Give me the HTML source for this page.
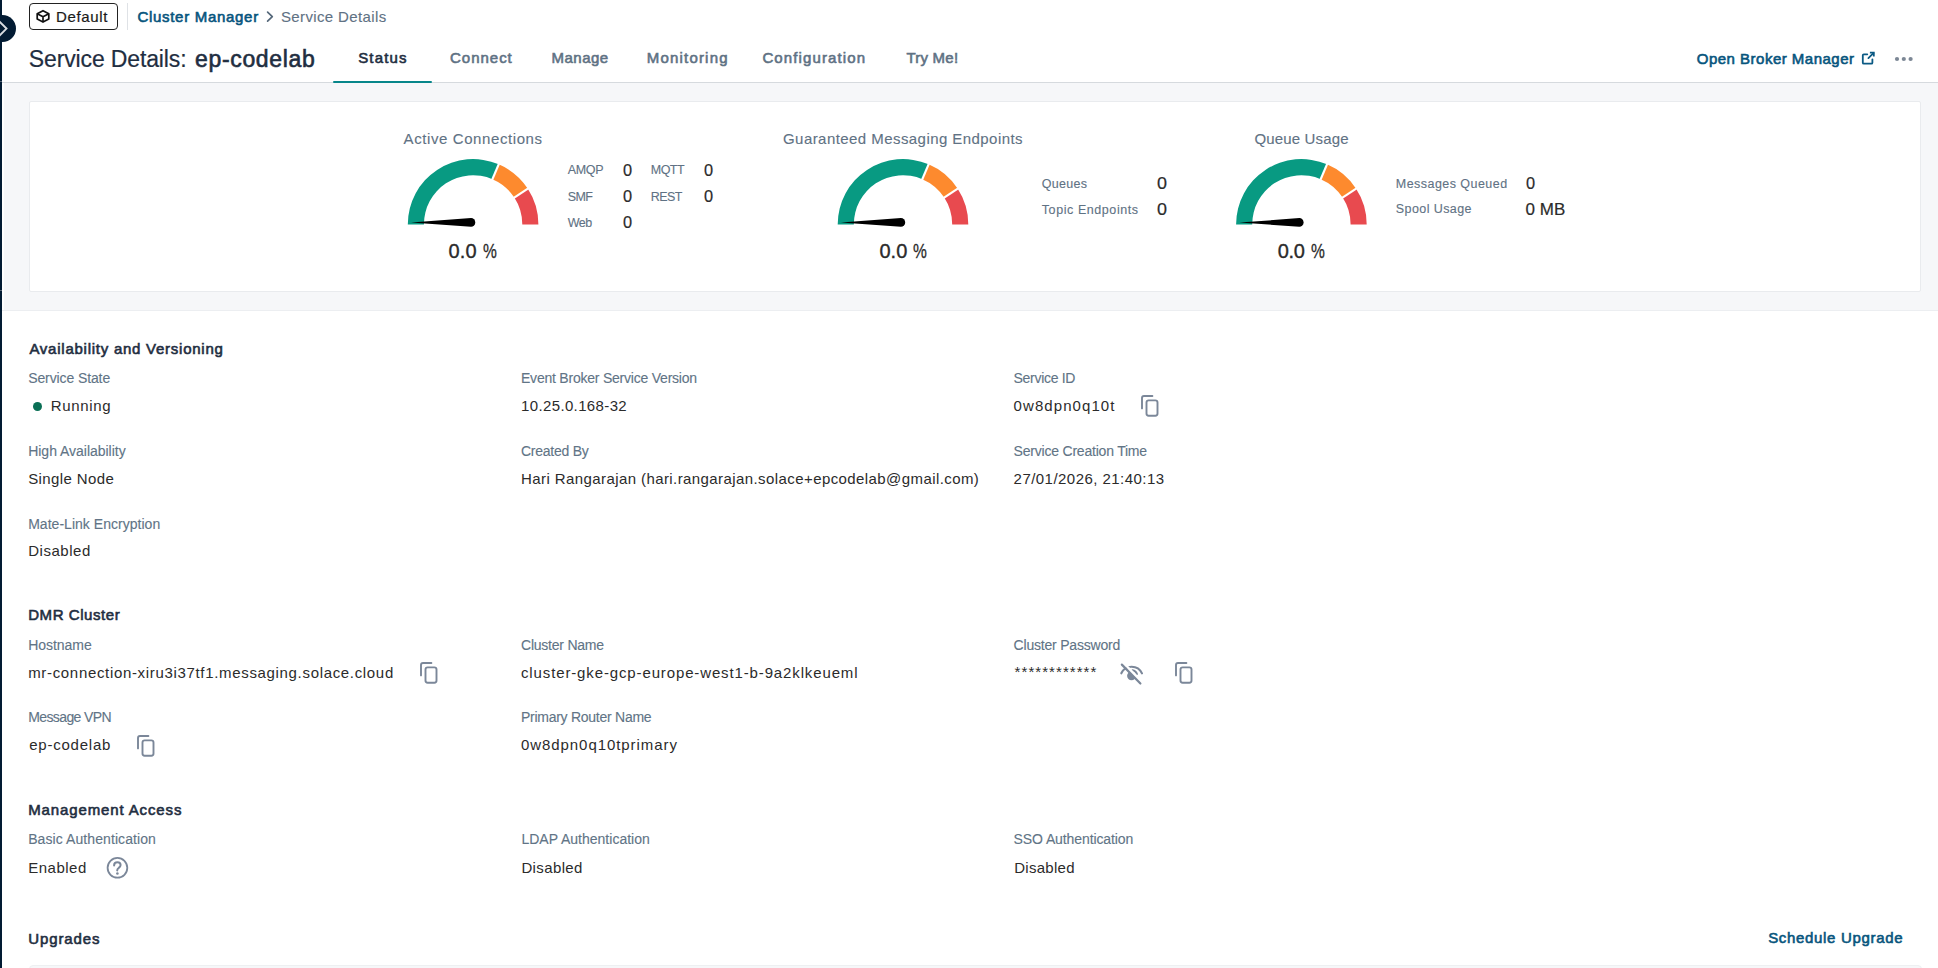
<!DOCTYPE html>
<html><head><meta charset="utf-8"><style>
html,body{margin:0;padding:0;width:1938px;height:968px;overflow:hidden;background:#fff;}
body{position:relative;font-family:"Liberation Sans",sans-serif;}
.t{position:absolute;white-space:pre;line-height:1;}
.ic{position:absolute;}
.abs{position:absolute;}
</style></head><body>
<div class="abs" style="left:0;top:83px;width:1938px;height:227px;background:#f6f7f9;border-bottom:1px solid #eceef1"></div>
<div class="abs" style="left:0;top:82px;width:1938px;height:1px;background:#d6dade"></div>
<div class="abs" style="left:2px;top:83px;width:2px;height:227px;background:#fff"></div>
<div class="abs" style="left:0;top:0;width:2px;height:968px;background:#021b33"></div>
<div class="abs" style="left:0;top:81px;width:2px;height:1px;background:#5a6878"></div>
<div class="abs" style="left:0;top:290px;width:2px;height:1px;background:#5a6878"></div>
<div class="abs" style="left:29px;top:101px;width:1890px;height:189px;background:#fff;border:1px solid #e9ebee;border-radius:2px"></div>
<div class="abs" style="left:29px;top:965px;width:1891px;height:10px;background:#f6f7f9;border:1px solid #eef0f2;border-radius:4px"></div>
<!-- left nav bar -->
<div class="abs" style="left:-11px;top:15px;width:27px;height:27px;border-radius:50%;background:#021b33"></div>
<svg class="ic" style="left:0;top:16px" width="12" height="26" viewBox="0 16 12 26"><path d="M-2,20.1 L6.5,28.6 L-2,37.1" fill="none" stroke="#d9dde2" stroke-width="1.9"/></svg>
<!-- Default chip -->
<div class="abs" style="left:29px;top:3px;width:87px;height:25px;border:1px solid #222;border-radius:4px"></div>
<svg class="ic" style="left:30px;top:4px" width="26" height="24" viewBox="30 4 26 24"><g fill="none" stroke="#111" stroke-width="1.7" stroke-linejoin="round"><path d="M43,10.7 L48.8,13.8 L48.8,19.1 L43,22.1 L37.2,19.1 L37.2,13.8 Z"/><path d="M37.2,13.8 L43,16.7 L48.8,13.8 M43,16.7 V22.1"/></g></svg>
<div class="abs" style="left:127px;top:3px;width:1px;height:27px;background:#dfe2e6"></div>
<svg class="ic" style="left:262px;top:8px" width="16" height="18" viewBox="262 8 16 18"><path d="M267.6,12.1 L272.3,16.65 L267.6,21.2" fill="none" stroke="#55687a" stroke-width="1.7" stroke-linecap="round" stroke-linejoin="round"/></svg>
<!-- tab underline -->
<div class="abs" style="left:333px;top:80.7px;width:99px;height:2.2px;background:#07868a;border-radius:1.5px"></div>
<!-- open broker icon -->
<svg class="ic" style="left:1858px;top:48px" width="20" height="20" viewBox="1858 48 20 20"><g fill="none" stroke="#0b5a84" stroke-width="1.8" stroke-linecap="round"><path d="M1867.3,54.3 H1863.8 Q1862.8,54.3 1862.8,55.3 V62.7 Q1862.8,63.7 1863.8,63.7 H1871.4 Q1872.4,63.7 1872.4,62.7 V59.3"/><path d="M1869.9,52.7 H1873.8 V56.6" stroke-linecap="butt"/><path d="M1873.4,53.1 L1868.4,58.1"/></g></svg>
<svg class="ic" style="left:1893px;top:55px" width="22" height="8" viewBox="0 0 22 8"><circle cx="4" cy="4" r="2.1" fill="#7c8795"/><circle cx="10.8" cy="4" r="2.1" fill="#7c8795"/><circle cx="17.6" cy="4" r="2.1" fill="#7c8795"/></svg>
<!-- gauges -->
<svg class="ic" style="left:0;top:0" width="1938" height="300"><path d="M407.80,224.40 A65.3,65.3 0 0 1 498.72,164.34 L492.40,179.14 A49.2,49.2 0 0 0 423.90,224.40 Z" fill="#089a82"/><path d="M498.72,164.34 A65.3,65.3 0 0 1 527.80,188.74 L514.32,197.53 A49.2,49.2 0 0 0 492.40,179.14 Z" fill="#fd8a2e"/><path d="M527.80,188.74 A65.3,65.3 0 0 1 538.40,224.40 L522.30,224.40 A49.2,49.2 0 0 0 514.32,197.53 Z" fill="#e84a4f"/><line x1="492.01" y1="180.06" x2="499.11" y2="163.42" stroke="#fff" stroke-width="2.2"/><line x1="513.48" y1="198.08" x2="528.64" y2="188.19" stroke="#fff" stroke-width="2.2"/><path d="M411.00,222.60 L471.00,218.10 A4.3,4.3 0 0 1 471.00,226.70 Z" fill="#000"/><path d="M837.70,224.40 A65.3,65.3 0 0 1 928.62,164.34 L922.30,179.14 A49.2,49.2 0 0 0 853.80,224.40 Z" fill="#089a82"/><path d="M928.62,164.34 A65.3,65.3 0 0 1 957.70,188.74 L944.22,197.53 A49.2,49.2 0 0 0 922.30,179.14 Z" fill="#fd8a2e"/><path d="M957.70,188.74 A65.3,65.3 0 0 1 968.30,224.40 L952.20,224.40 A49.2,49.2 0 0 0 944.22,197.53 Z" fill="#e84a4f"/><line x1="921.91" y1="180.06" x2="929.01" y2="163.42" stroke="#fff" stroke-width="2.2"/><line x1="943.38" y1="198.08" x2="958.54" y2="188.19" stroke="#fff" stroke-width="2.2"/><path d="M840.90,222.60 L900.90,218.10 A4.3,4.3 0 0 1 900.90,226.70 Z" fill="#000"/><path d="M1236.10,224.40 A65.3,65.3 0 0 1 1327.02,164.34 L1320.70,179.14 A49.2,49.2 0 0 0 1252.20,224.40 Z" fill="#089a82"/><path d="M1327.02,164.34 A65.3,65.3 0 0 1 1356.10,188.74 L1342.62,197.53 A49.2,49.2 0 0 0 1320.70,179.14 Z" fill="#fd8a2e"/><path d="M1356.10,188.74 A65.3,65.3 0 0 1 1366.70,224.40 L1350.60,224.40 A49.2,49.2 0 0 0 1342.62,197.53 Z" fill="#e84a4f"/><line x1="1320.31" y1="180.06" x2="1327.41" y2="163.42" stroke="#fff" stroke-width="2.2"/><line x1="1341.78" y1="198.08" x2="1356.94" y2="188.19" stroke="#fff" stroke-width="2.2"/><path d="M1239.30,222.60 L1299.30,218.10 A4.3,4.3 0 0 1 1299.30,226.70 Z" fill="#000"/></svg>
<!-- running dot -->
<div class="abs" style="left:33px;top:401.7px;width:9px;height:9px;border-radius:50%;background:#0a6f55"></div>
<svg class="ic" style="left:1139.40px;top:393.30px" width="22" height="26" viewBox="0 0 22 26"><g fill="none" stroke="#7b8799" stroke-width="1.9" stroke-linecap="round"><path d="M3,15.4 V5 Q3,3 5,3 H13.4"/><rect x="7.5" y="7.4" width="11" height="15.4" rx="2.2"/></g></svg>
<svg class="ic" style="left:418.10px;top:660.10px" width="22" height="26" viewBox="0 0 22 26"><g fill="none" stroke="#7b8799" stroke-width="1.9" stroke-linecap="round"><path d="M3,15.4 V5 Q3,3 5,3 H13.4"/><rect x="7.5" y="7.4" width="11" height="15.4" rx="2.2"/></g></svg>
<svg class="ic" style="left:134.60px;top:732.60px" width="22" height="26" viewBox="0 0 22 26"><g fill="none" stroke="#7b8799" stroke-width="1.9" stroke-linecap="round"><path d="M3,15.4 V5 Q3,3 5,3 H13.4"/><rect x="7.5" y="7.4" width="11" height="15.4" rx="2.2"/></g></svg>
<svg class="ic" style="left:1173.30px;top:660.20px" width="22" height="26" viewBox="0 0 22 26"><g fill="none" stroke="#7b8799" stroke-width="1.9" stroke-linecap="round"><path d="M3,15.4 V5 Q3,3 5,3 H13.4"/><rect x="7.5" y="7.4" width="11" height="15.4" rx="2.2"/></g></svg>
<!-- eye slash -->
<svg class="ic" style="left:1110px;top:655px" width="40" height="35" viewBox="0 0 40 35"><defs><clipPath id="ll"><path d="M0,0 L11.85,9.64 L30.4,28.5 L0,35 Z"/></clipPath></defs>
<g fill="none" stroke="#7b8799" stroke-width="2.1" stroke-linecap="round"><path d="M11.3,18.3 A11.4,11.4 0 0 1 32,18.4"/><path d="M22.45,15.2 A5.6,5.6 0 0 1 26.9,19"/></g>
<circle cx="21.5" cy="20.8" r="4.4" fill="#7b8799" clip-path="url(#ll)"/>
<line x1="13.6" y1="8.2" x2="32" y2="26.9" stroke="#fff" stroke-width="2.4"/>
<line x1="11.85" y1="9.64" x2="30.4" y2="28.5" stroke="#7b8799" stroke-width="2.2" stroke-linecap="round"/></svg>
<!-- help icon -->
<svg class="ic" style="left:105px;top:856px" width="25" height="24" viewBox="0 0 25 24"><circle cx="12.45" cy="11.8" r="9.85" fill="none" stroke="#7b8799" stroke-width="1.8"/><path d="M9.1,9.4 Q9.1,6.3 12.4,6.3 Q15.6,6.3 15.6,9.1 Q15.6,10.9 13.6,12 Q12.4,12.7 12.2,14.4" fill="none" stroke="#7b8799" stroke-width="2" stroke-linecap="round"/><circle cx="12.4" cy="17.5" r="1.3" fill="#7b8799"/></svg>
<span id="t_default" class="t" style="-webkit-text-stroke:0.2px #1a1a1a;left:56.00px;top:9.0px;font-size:15px;font-weight:400;color:#1a1a1a;letter-spacing:0.667px">Default</span>
<span id="t_cm" class="t" style="-webkit-text-stroke:0.6px #07557d;left:137.40px;top:9.0px;font-size:15px;font-weight:400;color:#07557d;letter-spacing:0.704px">Cluster Manager</span>
<span id="t_sd" class="t" style="-webkit-text-stroke:0.12px #5f7284;left:281.00px;top:9.0px;font-size:15px;font-weight:400;color:#5f7284;letter-spacing:0.365px">Service Details</span>
<span id="t_title1" class="t" style="-webkit-text-stroke:0.2px #1f2e41;left:28.80px;top:48.0px;font-size:23px;font-weight:400;color:#1f2e41;letter-spacing:-0.134px">Service Details:</span>
<span id="t_title2" class="t" style="-webkit-text-stroke:0.6px #1f2e41;left:195.00px;top:48.0px;font-size:23px;font-weight:400;color:#1f2e41;letter-spacing:0.666px">ep-codelab</span>
<span id="t_tab1" class="t" style="-webkit-text-stroke:0.6px #1f2e41;left:358.20px;top:50.0px;font-size:15px;font-weight:400;color:#1f2e41;letter-spacing:1.180px">Status</span>
<span id="t_tab2" class="t" style="-webkit-text-stroke:0.6px #5f7284;left:450.00px;top:50.0px;font-size:15px;font-weight:400;color:#5f7284;letter-spacing:0.986px">Connect</span>
<span id="t_tab3" class="t" style="-webkit-text-stroke:0.6px #5f7284;left:551.60px;top:50.0px;font-size:15px;font-weight:400;color:#5f7284;letter-spacing:0.460px">Manage</span>
<span id="t_tab4" class="t" style="-webkit-text-stroke:0.6px #5f7284;left:646.80px;top:50.0px;font-size:15px;font-weight:400;color:#5f7284;letter-spacing:1.186px">Monitoring</span>
<span id="t_tab5" class="t" style="-webkit-text-stroke:0.6px #5f7284;left:762.40px;top:50.0px;font-size:15px;font-weight:400;color:#5f7284;letter-spacing:1.124px">Configuration</span>
<span id="t_tab6" class="t" style="-webkit-text-stroke:0.6px #5f7284;left:906.40px;top:50.0px;font-size:15px;font-weight:400;color:#5f7284;letter-spacing:0.230px">Try Me!</span>
<span id="t_obm" class="t" style="-webkit-text-stroke:0.6px #07557d;left:1696.80px;top:51.0px;font-size:15px;font-weight:400;color:#07557d;letter-spacing:0.489px">Open Broker Manager</span>
<span id="t_g1" class="t" style="-webkit-text-stroke:0.12px #5f7284;left:403.60px;top:131.0px;font-size:15px;font-weight:400;color:#5f7284;letter-spacing:0.589px">Active Connections</span>
<span id="t_g2" class="t" style="-webkit-text-stroke:0.12px #5f7284;left:783.00px;top:131.0px;font-size:15px;font-weight:400;color:#5f7284;letter-spacing:0.439px">Guaranteed Messaging Endpoints</span>
<span id="t_g3" class="t" style="-webkit-text-stroke:0.12px #5f7284;left:1254.40px;top:131.0px;font-size:15px;font-weight:400;color:#5f7284;letter-spacing:0.170px">Queue Usage</span>
<span id="t_p1" class="t" style="-webkit-text-stroke:0.35px #2b2b2b;left:448.60px;top:241.0px;font-size:20px;font-weight:400;color:#2b2b2b;letter-spacing:0.100px">0.0</span>
<span id="t_p1b" class="t" style="-webkit-text-stroke:0.3px #2b2b2b;transform:scaleX(0.778);transform-origin:0 0;left:483.00px;top:241.0px;font-size:20px;font-weight:400;color:#2b2b2b;letter-spacing:0.000px">%</span>
<span id="t_p2" class="t" style="-webkit-text-stroke:0.35px #2b2b2b;left:879.40px;top:241.0px;font-size:20px;font-weight:400;color:#2b2b2b;letter-spacing:0.100px">0.0</span>
<span id="t_p2b" class="t" style="-webkit-text-stroke:0.3px #2b2b2b;transform:scaleX(0.778);transform-origin:0 0;left:912.80px;top:241.0px;font-size:20px;font-weight:400;color:#2b2b2b;letter-spacing:0.000px">%</span>
<span id="t_p3" class="t" style="-webkit-text-stroke:0.35px #2b2b2b;left:1277.80px;top:241.0px;font-size:20px;font-weight:400;color:#2b2b2b;letter-spacing:-0.400px">0.0</span>
<span id="t_p3b" class="t" style="-webkit-text-stroke:0.3px #2b2b2b;transform:scaleX(0.778);transform-origin:0 0;left:1311.20px;top:241.0px;font-size:20px;font-weight:400;color:#2b2b2b;letter-spacing:0.000px">%</span>
<span id="t_amqp" class="t" style="-webkit-text-stroke:0.12px #5f7284;left:567.80px;top:164.0px;font-size:12.5px;font-weight:400;color:#5f7284;letter-spacing:-0.360px">AMQP</span>
<span id="t_amqp0" class="t" style="-webkit-text-stroke:0.2px #2b2b2b;transform:scaleX(0.962);transform-origin:0 0;left:622.60px;top:162.0px;font-size:17px;font-weight:400;color:#2b2b2b;letter-spacing:0.000px">0</span>
<span id="t_mqtt" class="t" style="-webkit-text-stroke:0.12px #5f7284;left:650.80px;top:164.0px;font-size:12.5px;font-weight:400;color:#5f7284;letter-spacing:-0.564px">MQTT</span>
<span id="t_mqtt0" class="t" style="-webkit-text-stroke:0.2px #2b2b2b;transform:scaleX(0.962);transform-origin:0 0;left:704.00px;top:162.0px;font-size:17px;font-weight:400;color:#2b2b2b;letter-spacing:0.000px">0</span>
<span id="t_smf" class="t" style="-webkit-text-stroke:0.12px #5f7284;left:567.80px;top:191.0px;font-size:12.5px;font-weight:400;color:#5f7284;letter-spacing:-0.700px">SMF</span>
<span id="t_smf0" class="t" style="-webkit-text-stroke:0.2px #2b2b2b;transform:scaleX(0.962);transform-origin:0 0;left:622.60px;top:188.0px;font-size:17px;font-weight:400;color:#2b2b2b;letter-spacing:0.000px">0</span>
<span id="t_rest" class="t" style="-webkit-text-stroke:0.12px #5f7284;left:650.80px;top:191.0px;font-size:12.5px;font-weight:400;color:#5f7284;letter-spacing:-0.597px">REST</span>
<span id="t_rest0" class="t" style="-webkit-text-stroke:0.2px #2b2b2b;transform:scaleX(0.962);transform-origin:0 0;left:704.00px;top:188.0px;font-size:17px;font-weight:400;color:#2b2b2b;letter-spacing:0.000px">0</span>
<span id="t_web" class="t" style="-webkit-text-stroke:0.12px #5f7284;left:567.80px;top:217.0px;font-size:12.5px;font-weight:400;color:#5f7284;letter-spacing:-0.500px">Web</span>
<span id="t_web0" class="t" style="-webkit-text-stroke:0.2px #2b2b2b;transform:scaleX(0.962);transform-origin:0 0;left:622.60px;top:214.0px;font-size:17px;font-weight:400;color:#2b2b2b;letter-spacing:0.000px">0</span>
<span id="t_q" class="t" style="-webkit-text-stroke:0.12px #5f7284;left:1041.80px;top:178.0px;font-size:12.5px;font-weight:400;color:#5f7284;letter-spacing:0.280px">Queues</span>
<span id="t_q0" class="t" style="-webkit-text-stroke:0.2px #2b2b2b;transform:scaleX(1.056);transform-origin:0 0;left:1157.20px;top:175.0px;font-size:17px;font-weight:400;color:#2b2b2b;letter-spacing:0.000px">0</span>
<span id="t_te" class="t" style="-webkit-text-stroke:0.12px #5f7284;left:1041.80px;top:204.0px;font-size:12.5px;font-weight:400;color:#5f7284;letter-spacing:0.572px">Topic Endpoints</span>
<span id="t_te0" class="t" style="-webkit-text-stroke:0.2px #2b2b2b;transform:scaleX(1.056);transform-origin:0 0;left:1157.20px;top:201.0px;font-size:17px;font-weight:400;color:#2b2b2b;letter-spacing:0.000px">0</span>
<span id="t_mq" class="t" style="-webkit-text-stroke:0.12px #5f7284;left:1395.80px;top:178.0px;font-size:12.5px;font-weight:400;color:#5f7284;letter-spacing:0.454px">Messages Queued</span>
<span id="t_mq0" class="t" style="-webkit-text-stroke:0.2px #2b2b2b;transform:scaleX(0.962);transform-origin:0 0;left:1525.60px;top:175.0px;font-size:17px;font-weight:400;color:#2b2b2b;letter-spacing:0.000px">0</span>
<span id="t_su" class="t" style="-webkit-text-stroke:0.12px #5f7284;left:1395.80px;top:203.0px;font-size:12.5px;font-weight:400;color:#5f7284;letter-spacing:0.410px">Spool Usage</span>
<span id="t_su0" class="t" style="-webkit-text-stroke:0.2px #2b2b2b;left:1525.60px;top:201.0px;font-size:17px;font-weight:400;color:#2b2b2b;letter-spacing:0.030px">0 MB</span>
<span id="h_av" class="t" style="-webkit-text-stroke:0.6px #1f2e41;left:29.40px;top:341.0px;font-size:15px;font-weight:400;color:#1f2e41;letter-spacing:0.749px">Availability and Versioning</span>
<span id="h_dmr" class="t" style="-webkit-text-stroke:0.6px #1f2e41;left:28.20px;top:607.0px;font-size:15px;font-weight:400;color:#1f2e41;letter-spacing:0.570px">DMR Cluster</span>
<span id="h_ma" class="t" style="-webkit-text-stroke:0.6px #1f2e41;left:28.20px;top:802.0px;font-size:15px;font-weight:400;color:#1f2e41;letter-spacing:0.874px">Management Access</span>
<span id="h_up" class="t" style="-webkit-text-stroke:0.6px #1f2e41;left:28.20px;top:931.0px;font-size:15px;font-weight:400;color:#1f2e41;letter-spacing:0.910px">Upgrades</span>
<span id="l1" class="t" style="-webkit-text-stroke:0.12px #617486;left:28.20px;top:371.0px;font-size:14px;font-weight:400;color:#617486;letter-spacing:-0.107px">Service State</span>
<span id="l2" class="t" style="-webkit-text-stroke:0.12px #617486;left:521.00px;top:371.0px;font-size:14px;font-weight:400;color:#617486;letter-spacing:-0.222px">Event Broker Service Version</span>
<span id="l3" class="t" style="-webkit-text-stroke:0.12px #617486;left:1013.60px;top:371.0px;font-size:14px;font-weight:400;color:#617486;letter-spacing:-0.309px">Service ID</span>
<span id="l4" class="t" style="-webkit-text-stroke:0.12px #617486;left:28.20px;top:444.0px;font-size:14px;font-weight:400;color:#617486;letter-spacing:-0.022px">High Availability</span>
<span id="l5" class="t" style="-webkit-text-stroke:0.12px #617486;left:521.00px;top:444.0px;font-size:14px;font-weight:400;color:#617486;letter-spacing:-0.247px">Created By</span>
<span id="l6" class="t" style="-webkit-text-stroke:0.12px #617486;left:1013.60px;top:444.0px;font-size:14px;font-weight:400;color:#617486;letter-spacing:-0.210px">Service Creation Time</span>
<span id="l7" class="t" style="-webkit-text-stroke:0.12px #617486;left:28.20px;top:517.0px;font-size:14px;font-weight:400;color:#617486;letter-spacing:0.025px">Mate-Link Encryption</span>
<span id="l8" class="t" style="-webkit-text-stroke:0.12px #617486;left:28.20px;top:638.0px;font-size:14px;font-weight:400;color:#617486;letter-spacing:-0.046px">Hostname</span>
<span id="l9" class="t" style="-webkit-text-stroke:0.12px #617486;left:521.00px;top:638.0px;font-size:14px;font-weight:400;color:#617486;letter-spacing:-0.227px">Cluster Name</span>
<span id="l10" class="t" style="-webkit-text-stroke:0.12px #617486;left:1013.60px;top:638.0px;font-size:14px;font-weight:400;color:#617486;letter-spacing:-0.203px">Cluster Password</span>
<span id="l11" class="t" style="-webkit-text-stroke:0.12px #617486;left:28.20px;top:710.0px;font-size:14px;font-weight:400;color:#617486;letter-spacing:-0.600px">Message VPN</span>
<span id="l12" class="t" style="-webkit-text-stroke:0.12px #617486;left:521.00px;top:710.0px;font-size:14px;font-weight:400;color:#617486;letter-spacing:-0.266px">Primary Router Name</span>
<span id="l13" class="t" style="-webkit-text-stroke:0.12px #617486;left:28.20px;top:832.0px;font-size:14px;font-weight:400;color:#617486;letter-spacing:0.085px">Basic Authentication</span>
<span id="l14" class="t" style="-webkit-text-stroke:0.12px #617486;left:521.40px;top:832.0px;font-size:14px;font-weight:400;color:#617486;letter-spacing:0.014px">LDAP Authentication</span>
<span id="l15" class="t" style="-webkit-text-stroke:0.12px #617486;left:1013.60px;top:832.0px;font-size:14px;font-weight:400;color:#617486;letter-spacing:-0.100px">SSO Authentication</span>
<span id="v1" class="t" style="left:50.80px;top:398.0px;font-size:15px;font-weight:400;color:#2b2b2b;letter-spacing:0.654px">Running</span>
<span id="v2" class="t" style="left:521.00px;top:398.0px;font-size:15px;font-weight:400;color:#2b2b2b;letter-spacing:0.368px">10.25.0.168-32</span>
<span id="v3" class="t" style="left:1013.60px;top:398.0px;font-size:15px;font-weight:400;color:#2b2b2b;letter-spacing:1.070px">0w8dpn0q10t</span>
<span id="v4" class="t" style="left:28.20px;top:471.0px;font-size:15px;font-weight:400;color:#2b2b2b;letter-spacing:0.390px">Single Node</span>
<span id="v5" class="t" style="left:521.00px;top:471.0px;font-size:15px;font-weight:400;color:#2b2b2b;letter-spacing:0.414px">Hari Rangarajan (hari.rangarajan.solace+epcodelab@gmail.com)</span>
<span id="v6" class="t" style="left:1013.60px;top:471.0px;font-size:15px;font-weight:400;color:#2b2b2b;letter-spacing:0.459px">27/01/2026, 21:40:13</span>
<span id="v7" class="t" style="left:28.20px;top:543.0px;font-size:15px;font-weight:400;color:#2b2b2b;letter-spacing:0.526px">Disabled</span>
<span id="v8" class="t" style="left:28.20px;top:665.0px;font-size:15px;font-weight:400;color:#2b2b2b;letter-spacing:0.671px">mr-connection-xiru3i37tf1.messaging.solace.cloud</span>
<span id="v9" class="t" style="left:521.00px;top:665.0px;font-size:15px;font-weight:400;color:#2b2b2b;letter-spacing:0.868px">cluster-gke-gcp-europe-west1-b-9a2klkeueml</span>
<span id="v10" class="t" style="left:1014.60px;top:664.0px;font-size:15px;font-weight:400;color:#2b2b2b;letter-spacing:1.061px">************</span>
<span id="v11" class="t" style="left:29.20px;top:737.0px;font-size:15px;font-weight:400;color:#2b2b2b;letter-spacing:0.779px">ep-codelab</span>
<span id="v12" class="t" style="left:521.00px;top:737.0px;font-size:15px;font-weight:400;color:#2b2b2b;letter-spacing:0.930px">0w8dpn0q10tprimary</span>
<span id="v13" class="t" style="left:28.20px;top:860.0px;font-size:15px;font-weight:400;color:#2b2b2b;letter-spacing:0.500px">Enabled</span>
<span id="v14" class="t" style="left:521.40px;top:860.0px;font-size:15px;font-weight:400;color:#2b2b2b;letter-spacing:0.383px">Disabled</span>
<span id="v15" class="t" style="left:1014.20px;top:860.0px;font-size:15px;font-weight:400;color:#2b2b2b;letter-spacing:0.280px">Disabled</span>
<span id="t_su2" class="t" style="-webkit-text-stroke:0.6px #07557d;left:1768.20px;top:930.0px;font-size:15px;font-weight:400;color:#07557d;letter-spacing:0.673px">Schedule Upgrade</span>
</body></html>
